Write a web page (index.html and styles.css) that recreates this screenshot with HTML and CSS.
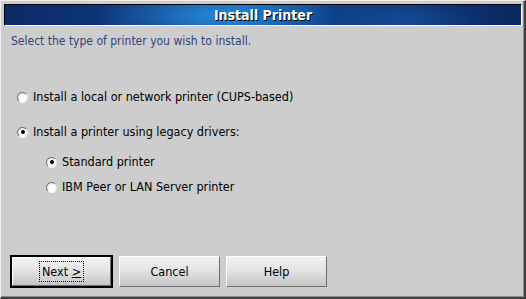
FILE: index.html
```html
<!DOCTYPE html>
<html>
<head>
<meta charset="utf-8">
<link rel="stylesheet" href="styles.css">
</head>
<body>
<div class="window">
  <div class="titlebar"><span class="title">Install Printer</span></div>
  <p class="prompt">Select the type of printer you wish to install.</p>
  <div class="options">
    <label class="opt opt-first"><span class="radio"></span><span>Install a local or network printer (CUPS-based)</span></label>
    <label class="opt opt-second"><span class="radio checked"></span><span>Install a printer using legacy drivers:</span></label>
    <div class="sub">
      <label class="opt opt-sub1"><span class="radio checked"></span><span>Standard printer</span></label>
      <label class="opt opt-sub2"><span class="radio"></span><span>IBM Peer or LAN Server printer</span></label>
    </div>
  </div>
  <div class="buttons">
    <div class="default-ring"><button class="btn"><span class="focus">Next <u>&gt;</u></span></button></div>
    <button class="btn">Cancel</button>
    <button class="btn">Help</button>
  </div>
</div>
</body>
</html>
```
FILE: styles.css
```css
html, body { margin: 0; padding: 0; }
body { width: 526px; height: 299px; overflow: hidden; background: #cdcdcd; }
.window {
  box-sizing: border-box;
  width: 526px; height: 299px;
  background: #cdcdcd;
  border-top: 1px solid #efefef;
  border-left: 1px solid #efefef;
  border-right: 2px solid #404040;
  border-bottom: 2px solid #404040;
  box-shadow: inset -1px -1px 0 #8a8a8a;
  padding: 3px 2px 0 3px;
  display: flex; flex-direction: column;
  font-family: "DejaVu Sans Condensed", "Liberation Sans", sans-serif;
  font-size: 12.5px;
  color: #000;
}
.titlebar {
  height: 22px;
  box-sizing: border-box;
  border-top: 1px solid #000;
  border-left: 1px solid #000;
  border-right: 1px solid #fff;
  border-bottom: 1px solid #fff;
  background:
    radial-gradient(ellipse 120px 30px at 210px 10px, rgba(40,140,220,0.85), rgba(40,140,220,0) 100%),
    radial-gradient(ellipse 80px 20px at 400px 14px, rgba(30,90,170,0.5), rgba(30,90,170,0) 100%),
    linear-gradient(90deg, #0b2a66 0%, #103b80 30%, #1560ad 45%, #0f3f85 65%, #0a2862 100%);
  display: flex; align-items: center; justify-content: center;
}
.title {
  color: #fff;
  font-weight: bold;
  font-size: 14px;
  text-shadow: 1px 1px 0 #000;
  line-height: 20px;
}
.prompt {
  margin: 7px 0 0 7px;
  color: #33447a;
  font-size: 12px;
  line-height: 16px;
}
.options { display: flex; flex-direction: column; margin-top: 40px; }
.opt { display: flex; align-items: center; gap: 5px; height: 16px; line-height: 16px; }
.opt-first { margin-left: 13px; }
.opt-second { margin-left: 13px; margin-top: 19px; }
.sub { display: flex; flex-direction: column; margin-left: 42px; margin-top: 14px; gap: 9px; }
.radio {
  box-sizing: border-box;
  width: 11px; height: 11px; border-radius: 50%;
  border: 1px solid; border-color: #6a6a6a #e8e8e8 #f4f4f4 #7a7a7a;
  background: radial-gradient(circle at 60% 60%, #ffffff 0%, #ffffff 45%, #c8c8c8 100%);
  position: relative; flex: none;
}
.radio.checked::after {
  content: ""; position: absolute; left: 2.5px; top: 2.5px; width: 4px; height: 4px;
  border-radius: 50%; background: #000;
}
.buttons { margin-top: auto; margin-bottom: 9px; margin-left: 6px; display: flex; align-items: center; gap: 6px; }
.default-ring { border: 2px solid #000; display: flex; }
.btn {
  box-sizing: border-box;
  width: 101px; height: 31px;
  margin: 0; padding: 0;
  font: inherit; font-size: 12.5px; color: #000;
  border: 1px solid; border-color: #ffffff #6e6e6e #6e6e6e #ffffff;
  background: linear-gradient(#f2f2f2 0%, #e4e4e4 45%, #c4c4c4 100%);
  display: flex; align-items: center; justify-content: center;
}
.default-ring .btn { width: 99px; height: 29px; }
.focus { outline: 1px dotted #000; outline-offset: 1px; padding: 1px 1px; }
```
